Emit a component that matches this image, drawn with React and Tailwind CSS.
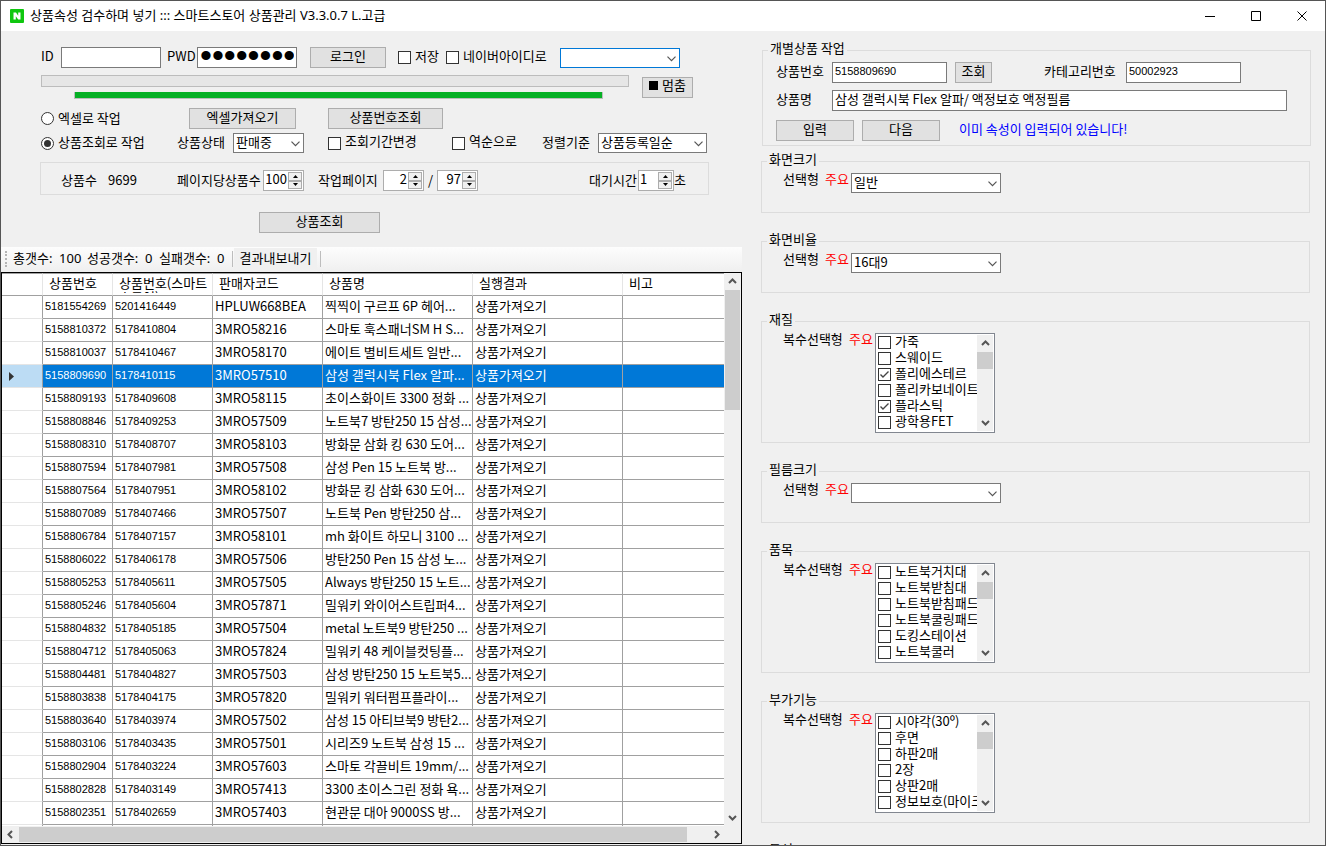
import React from "react";
import clsx from "clsx";

const PRODUCTS = [
  ["5181554269", "5201416449", "HPLUW668BEA", "찍찍이 구르프 6P 헤어..."],
  ["5158810372", "5178410804", "3MRO58216", "스마토 훅스패너SM H S..."],
  ["5158810037", "5178410467", "3MRO58170", "에이트 별비트세트 일반..."],
  ["5158809690", "5178410115", "3MRO57510", "삼성 갤럭시북 Flex 알파..."],
  ["5158809193", "5178409608", "3MRO58115", "초이스화이트 3300 정화 ..."],
  ["5158808846", "5178409253", "3MRO57509", "노트북7 방탄250 15 삼성..."],
  ["5158808310", "5178408707", "3MRO58103", "방화문 삼화 킹 630 도어..."],
  ["5158807594", "5178407981", "3MRO57508", "삼성 Pen 15 노트북 방..."],
  ["5158807564", "5178407951", "3MRO58102", "방화문 킹 삼화 630 도어..."],
  ["5158807089", "5178407466", "3MRO57507", "노트북 Pen 방탄250 삼..."],
  ["5158806784", "5178407157", "3MRO58101", "mh 화이트 하모니 3100 ..."],
  ["5158806022", "5178406178", "3MRO57506", "방탄250 Pen 15 삼성 노..."],
  ["5158805253", "5178405611", "3MRO57505", "Always 방탄250 15 노트..."],
  ["5158805246", "5178405604", "3MRO57871", "밀워키 와이어스트립퍼4..."],
  ["5158804832", "5178405185", "3MRO57504", "metal 노트북9 방탄250 ..."],
  ["5158804712", "5178405063", "3MRO57824", "밀워키 48 케이블컷팅플..."],
  ["5158804481", "5178404827", "3MRO57503", "삼성 방탄250 15 노트북5..."],
  ["5158803838", "5178404175", "3MRO57820", "밀워키 워터펌프플라이..."],
  ["5158803640", "5178403974", "3MRO57502", "삼성 15 아티브북9 방탄2..."],
  ["5158803106", "5178403435", "3MRO57501", "시리즈9 노트북 삼성 15 ..."],
  ["5158802904", "5178403224", "3MRO57603", "스마토 각끌비트 19mm/..."],
  ["5158802828", "5178403149", "3MRO57413", "3300 초이스그린 정화 욕..."],
  ["5158802351", "5178402659", "3MRO57403", "현관문 대아 9000SS 방..."],
];

const SELECTED_ID = "5158809690";

const HEADERS = ["상품번호", "상품번호(스마트스토어)", "판매자코드", "상품명", "실행결과", "비고"];

const NUMBER_FONT = "font-['Liberation_Sans',sans-serif] text-[11px]";

const ATTRIBUTES = [
  { name: "화면크기", value: "일반" },
  { name: "화면비율", value: "16대9" },
  {
    name: "재질",
    options: ["가죽", "스웨이드", "폴리에스테르", "폴리카보네이트", "플라스틱", "광학용FET"],
    checked: ["폴리에스테르", "플라스틱"],
  },
  { name: "필름크기", value: "" },
  {
    name: "품목",
    options: ["노트북거치대", "노트북받침대", "노트북받침패드", "노트북쿨링패드", "도킹스테이션", "노트북쿨러"],
    checked: [],
  },
  {
    name: "부가기능",
    options: ["시야각(30º)", "후면", "하판2매", "2장", "상판2매", "정보보호(마이크로루버)"],
    checked: [],
  },
  { name: "특성", value: "" },
];

function Arrow({ dir, className }) {
  const paths = {
    up: "M1 6 L4.500 2.500 L8 6",
    down: "M1 3 L4.500 6.500 L8 3",
    left: "M6 1 L2.500 4.500 L6 8",
    right: "M3 1 L6.500 4.500 L3 8",
  };
  return (
    <svg viewBox="0 0 9 9" className={clsx("size-[9px] shrink-0", className)} fill="none" stroke="#555" strokeWidth="2">
      <path d={paths[dir]} />
    </svg>
  );
}

function Button({ className, children }) {
  return (
    <button
      type="button"
      className={clsx("flex h-[21px] shrink-0 items-center justify-center border border-[#adadad] bg-[#e1e1e1] pb-1", className)}
    >
      {children}
    </button>
  );
}

function TextBox({ className, ...props }) {
  return (
    <input
      className={clsx("h-[21px] min-w-0 border border-[#7a7a7a] bg-white px-0.5 pb-1 outline-none", className)}
      {...props}
    />
  );
}

function Check({ label, checked = false, className }) {
  return (
    <label className={clsx("flex shrink-0 items-center gap-1 whitespace-nowrap", className)}>
      <span className="relative flex size-[13px] shrink-0">
        <input
          type="checkbox"
          defaultChecked={checked}
          className="peer size-[13px] appearance-none border border-[#333] bg-white"
        />
        <svg
          viewBox="0 0 13 13"
          className="pointer-events-none absolute inset-0 hidden peer-checked:block"
          fill="none"
          stroke="#444"
          strokeWidth="1.4"
        >
          <path d="M2.500 6.500 L5 9 L10.500 3.500" />
        </svg>
      </span>
      <span className="pb-1">{label}</span>
    </label>
  );
}

function Radio({ label, checked = false, className }) {
  return (
    <label className={clsx("flex shrink-0 items-center gap-1 whitespace-nowrap", className)}>
      <span className="relative flex size-[13px] shrink-0">
        <input
          type="radio"
          name="mode"
          defaultChecked={checked}
          className="peer size-[13px] appearance-none rounded-full border border-[#333] bg-white"
        />
        <span className="pointer-events-none absolute inset-[3px] hidden rounded-full bg-[#333] peer-checked:block" />
      </span>
      <span className="pb-0.5">{label}</span>
    </label>
  );
}

function Select({ id, value, label, focused, className }) {
  return (
    <span className={clsx("relative flex h-5 shrink-0", className)}>
      <select
        id={id}
        aria-label={label}
        className={clsx(
          "w-full appearance-none border bg-white pb-0.5 pl-0.5 outline-none",
          focused ? "border-[#0078d7]" : "border-[#7a7a7a]"
        )}
      >
        <option>{value}</option>
      </select>
      <svg
        viewBox="0 0 9 6"
        className="pointer-events-none absolute top-2 right-1 h-[6px] w-[9px]"
        fill="none"
        stroke="#555"
        strokeWidth="1.2"
      >
        <path d="M0.500 0.700 L4.500 4.700 L8.500 0.700" />
      </svg>
    </span>
  );
}

function Spinner({ id, value, label, align = "text-right", className }) {
  return (
    <span className={clsx("flex h-[21px] shrink-0 border border-[#adadad] bg-white p-px", className)}>
      <input id={id} aria-label={label} defaultValue={value} className={clsx("w-0 min-w-0 flex-1 pr-px pb-1 outline-none", align)} />
      <span className="flex w-[14px] flex-col">
        {["up", "down"].map((dir) => (
          <button
            key={dir}
            type="button"
            aria-label={dir}
            className="flex flex-1 items-center justify-center border border-[#adadad] bg-[#f0f0f0]"
          >
            <svg viewBox="0 0 5 3" className="h-[3px] w-[5px]">
              <path d={dir === "up" ? "M0 3 L2.500 0 L5 3 Z" : "M0 0 L2.500 3 L5 0 Z"} />
            </svg>
          </button>
        ))}
      </span>
    </span>
  );
}

function TitleBar() {
  return (
    <header className="flex h-[30px] shrink-0 items-center bg-white pl-[9px] font-['Noto_Sans','Noto_Sans_CJK_KR',sans-serif]">
      <svg viewBox="0 0 14 14" className="size-[14px]">
        <rect width="14" height="14" rx="1" fill="#0fc70f" />
        <path d="M3.500 10.500 V3.500 H6 L8.200 6.800 V3.500 H10.500 V10.500 H8.200 L5.800 7.200 V10.500 Z" fill="#fff" />
      </svg>
      <h1 className="flex-1 pb-0.5 pl-1.5 text-[13px]">상품속성 검수하며 넣기 ::: 스마트스토어 상품관리 V3.3.0.7 L.고급</h1>
      <div className="flex">
        {[
          ["최소화", "M0 5.500 H10"],
          ["최대화", "M0.500 0.500 H9.500 V9.500 H0.500 Z"],
          ["닫기", "M0.500 0.500 L9.500 9.500 M9.500 0.500 L0.500 9.500"],
        ].map(([label, d]) => (
          <button key={label} type="button" aria-label={label} className="flex h-[30px] w-[46px] items-center justify-center">
            <svg viewBox="0 0 10 10" className="size-[10px]" fill="none" stroke="#000">
              <path d={d} />
            </svg>
          </button>
        ))}
      </div>
    </header>
  );
}

function SearchForm() {
  return (
    <form className="shrink-0 pt-4 pb-[14px] pl-10">
      <div className="flex h-[21px] items-center">
        <label htmlFor="user-id" className="w-5 pb-1">ID</label>
        <TextBox id="user-id" className="w-[100px]" />
        <label htmlFor="user-pw" className="ml-1.5 w-[30px] pb-1">PWD</label>
        <TextBox
          id="user-pw"
          type="password"
          defaultValue="password"
          className="w-[100px] font-['Liberation_Sans',sans-serif] text-[34px]"
        />
        <Button className="ml-[13px] w-[76px]">로그인</Button>
        <Check label="저장" className="ml-3 w-12" />
        <Check label="네이버아이디로" className="w-[114px]" />
        <Select label="계정" value="" focused className="w-[120px]" />
      </div>

      <div className="mt-[7px] flex items-center">
        <div className="flex w-[588px] flex-col gap-[5px]">
          <div role="progressbar" aria-label="전체 진행" className="h-3 border border-[#bcbcbc] bg-[#e6e6e6]" />
          <div role="progressbar" aria-label="현재 진행" className="ml-[33px] h-[7px] w-[529px] border-x border-b border-[#bcbcbc] bg-[#06b025]" />
        </div>
        <Button className="ml-[13px] w-[51px] gap-1">
          <span className="size-[9px] bg-black" />
          멈춤
        </Button>
      </div>

      <div className="mt-[9px] flex items-center">
        <Radio label="엑셀로 작업" className="w-[148px]" />
        <Button className="w-[107px]">엑셀가져오기</Button>
        <Button className="ml-8 w-[115px]">상품번호조회</Button>
      </div>

      <div className="mt-1 flex h-5 items-center">
        <Radio label="상품조회로 작업" checked className="w-[136px]" />
        <label htmlFor="status" className="w-14 pb-0.5">상품상태</label>
        <Select id="status" value="판매중" className="w-[71px]" />
        <Check label="조회기간변경" className="ml-6 w-[124px]" />
        <Check label="역순으로" className="w-[90px]" />
        <label htmlFor="sort" className="w-14 pb-0.5">정렬기준</label>
        <Select id="sort" value="상품등록일순" className="w-[109px]" />
      </div>

      <div className="-ml-px mt-[9px] flex h-[33px] w-[669px] items-center border border-[#dcdcdc] pl-5 pt-1">
        <span className="w-[47px] pb-0.5">상품수</span>
        <span className="w-[69px] pb-0.5">9699</span>
        <label htmlFor="page-size" className="w-[86px] pb-0.5">페이지당상품수</label>
        <Spinner id="page-size" value="100" className="w-[41px]" />
        <label htmlFor="page" className="ml-[14px] w-[65px] pb-0.5">작업페이지</label>
        <Spinner id="page" value="2" className="w-[41px]" />
        <span className="w-[13px] pb-0.5 text-center">/</span>
        <Spinner label="전체 페이지" value="97" className="w-[41px]" />
        <label htmlFor="delay" className="ml-[111px] w-[49px] pb-0.5">대기시간</label>
        <Spinner id="delay" value="1" align="text-left" className="w-9" />
        <span className="pb-0.5">초</span>
      </div>

      <Button className="mt-[17px] ml-[218px] w-[121px]">상품조회</Button>
    </form>
  );
}

function ResultBar() {
  return (
    <div className="flex h-[25px] shrink-0 items-center bg-linear-to-b from-[#fdfdfd] to-[#efefef] pb-0.5 pl-1 font-['Noto_Sans','Noto_Sans_CJK_KR',sans-serif] whitespace-nowrap">
      <span className="h-4 w-0 border-l-2 border-dotted border-[#b5b5b5]" />
      <span className="ml-1.5 w-[74px] pb-0.5">총갯수: &nbsp;100</span>
      <span className="w-[72px] pb-0.5">성공갯수: &nbsp;0</span>
      <span className="w-[73px] pb-0.5">실패갯수: &nbsp;0</span>
      <span className="h-4 w-px bg-[#bdbdbd]" />
      <button type="button" className="ml-px h-[21px] w-[83px] bg-[#f0f0f0] pb-0.5">결과내보내기</button>
      <span className="ml-[3px] h-4 w-px bg-[#bdbdbd]" />
    </div>
  );
}

function ProductTable() {
  return (
    <div className="mb-px flex min-h-0 flex-1 flex-col border border-black bg-[#f0f0f0]">
      <div className="flex min-h-0 flex-1">
        <div className="min-w-0 flex-1 overflow-hidden bg-white">
          <table className="w-full table-fixed border-separate border-spacing-0">
            <colgroup>
              <col className="w-[41px]" />
              <col className="w-[70px]" />
              <col className="w-[100px]" />
              <col className="w-[110px]" />
              <col className="w-[150px]" />
              <col className="w-[150px]" />
              <col />
            </colgroup>
            <thead>
              <tr className="h-[23px]">
                <th className="border-t border-r border-b border-[#a0a0a0] border-r-[#e5e5e5] p-0" />
                {HEADERS.map((header) => (
                  <th
                    key={header}
                    className="border-t border-r border-b border-[#a0a0a0] border-r-[#e5e5e5] p-0 pl-1.5 text-left align-top font-normal last:border-r-0"
                  >
                    <div className="mt-0.5 h-[17px] overflow-hidden leading-[14px] break-all">{header}</div>
                  </th>
                ))}
              </tr>
            </thead>
            <tbody>
              {PRODUCTS.map((product) => {
                const selected = product[0] === SELECTED_ID;
                return (
                  <tr key={product[0]} className={clsx("h-[23px]", selected && "bg-[#0078d7] text-white")}>
                    <th
                      className={clsx(
                        "border-r border-b border-[#e5e5e5] border-r-[#a0a0a0] p-0 pl-[7px]",
                        selected && "bg-[#bcdcf4]"
                      )}
                    >
                      {selected && (
                        <svg viewBox="0 0 5 9" className="h-[9px] w-[5px]">
                          <path d="M0 0 L5 4.500 L0 9 Z" fill="#333" />
                        </svg>
                      )}
                    </th>
                    {[...product, "상품가져오기", ""].map((cell, index) => (
                      <td
                        key={index}
                        className={clsx(
                          "overflow-hidden border-b border-[#a0a0a0] p-0 pb-0.5 pl-0.5 whitespace-nowrap",
                          index < 5 && "border-r",
                          index < 2 && NUMBER_FONT
                        )}
                      >
                        {cell}
                      </td>
                    ))}
                  </tr>
                );
              })}
              <tr className="h-[23px]">
                {HEADERS.map((header) => (
                  <td key={header} className="border-r border-[#a0a0a0]" />
                ))}
                <td />
              </tr>
            </tbody>
          </table>
        </div>
        <div className="flex w-[17px] shrink-0 flex-col items-center pt-1 pb-1">
          <Arrow dir="up" />
          <div className="mt-1 h-[120px] w-[15px] bg-[#cdcdcd]" />
          <Arrow dir="down" className="mt-auto" />
        </div>
      </div>
      <div className="flex h-[17px] shrink-0 items-center pr-5 pl-1">
        <Arrow dir="left" />
        <div className="mr-[25px] ml-1 h-[15px] flex-1 bg-[#cdcdcd]" />
        <Arrow dir="right" />
      </div>
    </div>
  );
}

function Group({ title, className, children }) {
  return (
    <fieldset className="min-w-0 shrink-0 border border-[#dcdcdc]">
      <legend className="ml-[5px] px-0.5 pb-1 leading-4">{title}</legend>
      <div className={clsx("pt-0.5", className)}>{children}</div>
    </fieldset>
  );
}

function ProductGroup() {
  return (
    <Group title="개별상품 작업" className="pr-[23px] pb-1 pl-[13px]">
      <div className="flex items-center">
        <label htmlFor="product-no" className="w-14 pb-1">상품번호</label>
        <TextBox id="product-no" defaultValue="5158809690" className={clsx("w-[115px]", NUMBER_FONT)} />
        <Button className="ml-2 w-[37px]">조회</Button>
        <label htmlFor="category-no" className="ml-[52px] w-[82px] pb-1">카테고리번호</label>
        <TextBox id="category-no" defaultValue="50002923" className={clsx("w-[115px]", NUMBER_FONT)} />
      </div>
      <div className="mt-[7px] flex items-center">
        <label htmlFor="product-name" className="w-14 pb-1">상품명</label>
        <TextBox id="product-name" defaultValue="삼성 갤럭시북 Flex 알파/ 액정보호 액정필름" className="flex-1" />
      </div>
      <div className="mt-[9px] flex items-center gap-2">
        <Button className="w-[78px]">입력</Button>
        <Button className="w-[78px]">다음</Button>
        <p className="pb-1 pl-[11px] text-[#0000ff]">이미 속성이 입력되어 있습니다!</p>
      </div>
    </Group>
  );
}

function CheckList({ options, checked }) {
  return (
    <div className="flex h-[100px] w-[120px] border border-[#828790] bg-white p-px">
      <ul className="min-w-0 flex-1 overflow-hidden pl-px">
        {options.map((option) => (
          <li key={option} className="h-4">
            <Check label={option} checked={checked.includes(option)} className="h-[15px]" />
          </li>
        ))}
      </ul>
      <div className="flex w-4 shrink-0 flex-col items-center bg-[#f0f0f0] py-1">
        <Arrow dir="up" />
        <div className="mt-1 h-[17px] w-full bg-[#cdcdcd]" />
        <Arrow dir="down" className="mt-auto" />
      </div>
    </div>
  );
}

function AttributeGroup({ attribute }) {
  const id = `attr-${attribute.name}`;

  if (attribute.options) {
    return (
      <Group title={attribute.name} className="pb-[9px] pl-[21px]">
        <div className="flex items-start">
          <span className="w-[66px] leading-[11px]">복수선택형</span>
          <span className="w-[26px] leading-[11px] text-[#ff0000]">주요</span>
          <CheckList options={attribute.options} checked={attribute.checked} />
        </div>
      </Group>
    );
  }

  return (
    <Group title={attribute.name} className="pb-[19px] pl-[21px]">
      <div className="flex items-start">
        <label htmlFor={id} className="w-[42px] leading-[11px]">선택형</label>
        <span className="w-[26px] leading-[11px] text-[#ff0000]">주요</span>
        <Select id={id} value={attribute.value} className="w-[150px]" />
      </div>
    </Group>
  );
}

export default function App() {
  return (
    <div className="flex h-screen flex-col overflow-hidden border border-[#555] bg-[#f0f0f0] font-['Noto_Sans_CJK_KR',sans-serif] text-[13px] leading-4 text-black">
      <TitleBar />
      <main className="flex min-h-0 flex-1">
        <section className="flex w-[741px] shrink-0 flex-col">
          <SearchForm />
          <ResultBar />
          <ProductTable />
        </section>
        <section className="flex min-w-0 flex-1 flex-col overflow-hidden pt-[9px] pr-[14px] pl-5">
          <ProductGroup />
          <div className="-ml-px mt-[5px] mr-px flex flex-col gap-[18px]">
            {ATTRIBUTES.map((attribute) => (
              <AttributeGroup key={attribute.name} attribute={attribute} />
            ))}
          </div>
        </section>
      </main>
    </div>
  );
}
